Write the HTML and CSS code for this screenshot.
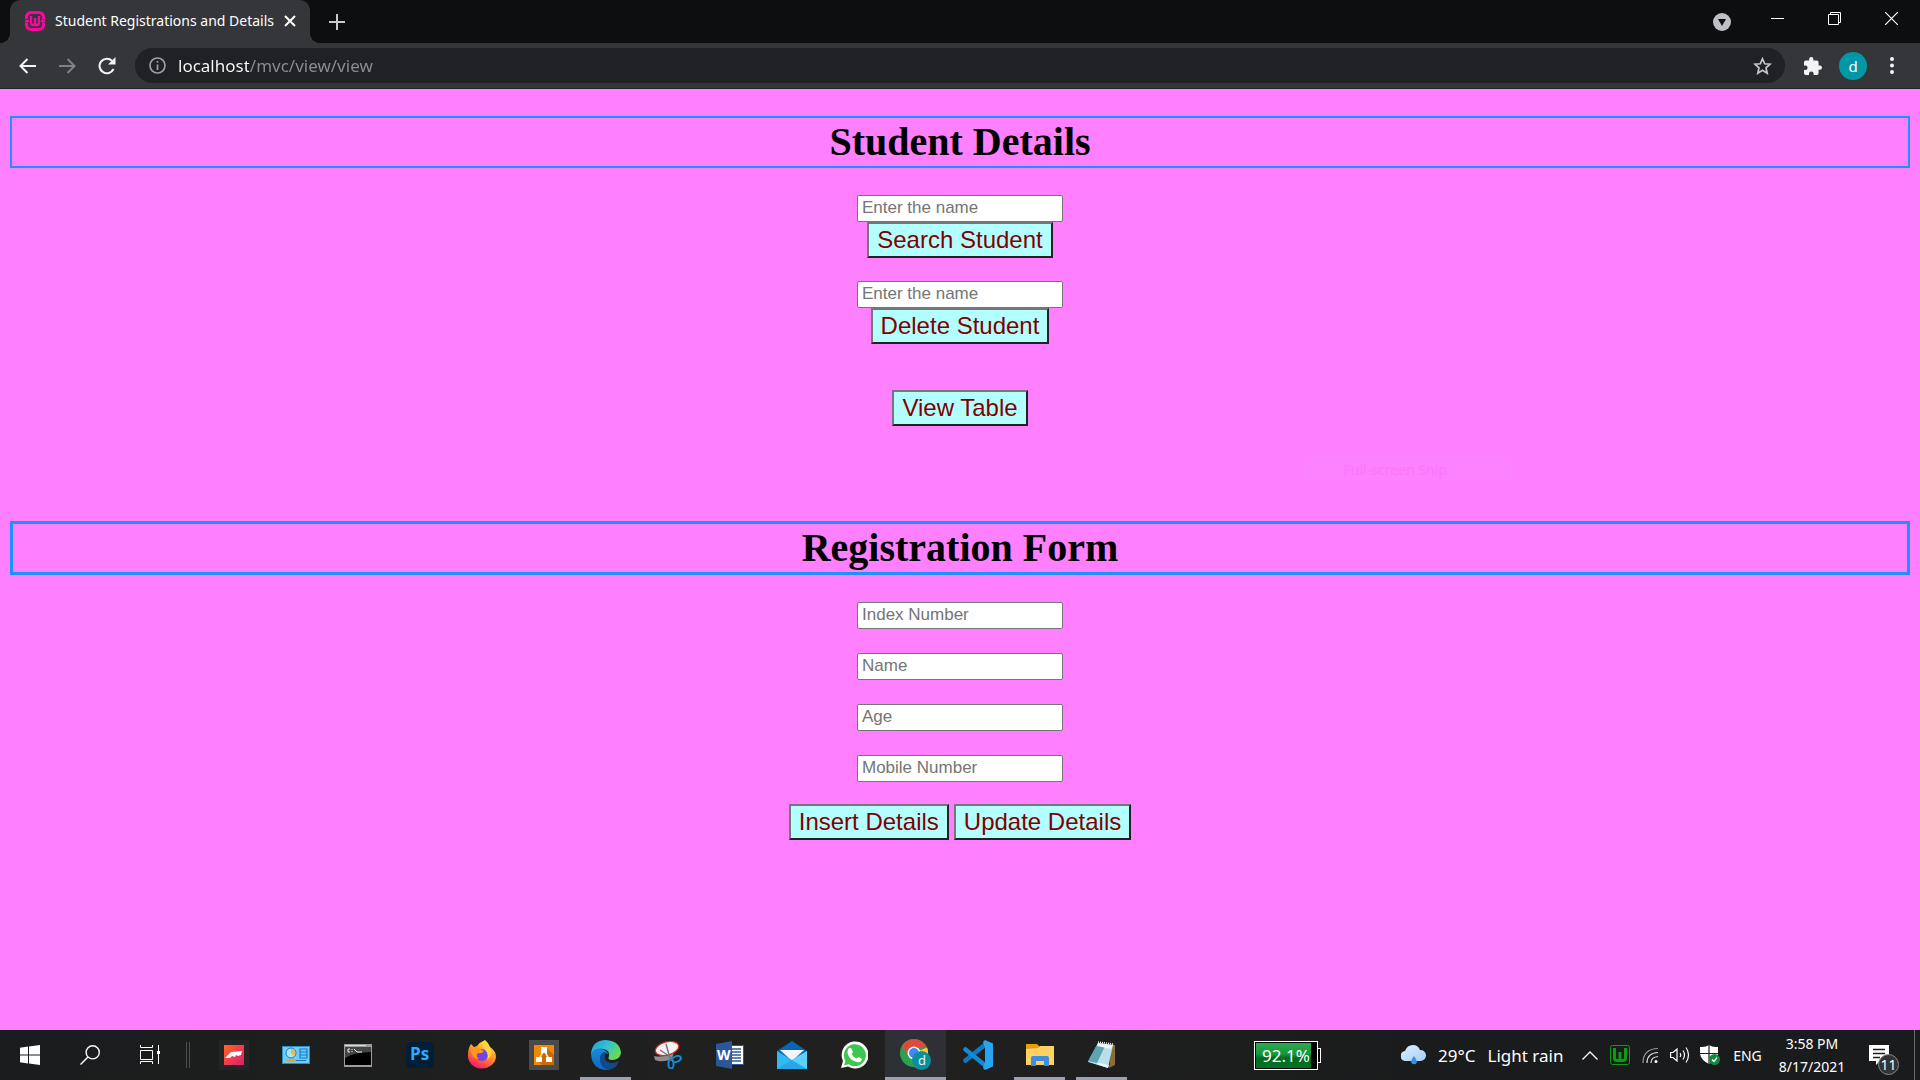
FILE: index.html
```html
<!DOCTYPE html>
<html lang="en">
<head>
<meta charset="utf-8">
<meta name="viewport" content="width=device-width, initial-scale=1">
<title>Student Registrations and Details</title>
<link rel="stylesheet" href="styles.css">
</head>
<body>
<header class="browser">
  <div class="tabstrip">
    <div class="tab">
      <svg class="favicon" width="20" height="20" viewBox="0 0 20 20" fill="none" stroke="#f908a0"><path stroke-width="3" d="M1.500 8V6.500Q1.500 1.500 6.500 1.500H13.500Q18.500 1.500 18.500 6.500V8M1.500 11.500V13.500Q1.500 18.500 6.500 18.500H13.500Q18.500 18.500 18.500 13.500V11.500"/><path stroke-width="2.400" d="M0 10H4M16 10H20M6 5V11.500Q6 14 8 14H12Q14 14 14 11.500V5M10 7V14"/></svg>
      <span class="tab-title">Student Registrations and Details</span>
      <button class="icon-btn tab-close" aria-label="Close tab"><svg width="12" height="12" viewBox="0 0 12 12" stroke="#fff" stroke-width="2"><path d="M1 1L11 11M11 1L1 11"/></svg></button>
    </div>
    <button class="icon-btn new-tab" aria-label="New tab"><svg width="16" height="16" viewBox="0 0 16 16" stroke="#c8cacf" stroke-width="2"><path d="M8 0V16M0 8H16"/></svg></button>
    <div class="window-controls">
      <button class="icon-btn tab-search" aria-label="Search tabs"><svg width="18" height="18" viewBox="0 0 18 18"><circle cx="9" cy="9" r="9" fill="#bdc1c6"/><path d="M5 6H13L9 13Z" fill="#0d0e10"/></svg></button>
      <button class="icon-btn win-btn" aria-label="Minimize"><svg width="13" height="13" viewBox="0 0 13 13"><path d="M0 6.500H13" stroke="#fff"/></svg></button>
      <button class="icon-btn win-btn" aria-label="Restore"><svg width="13" height="13" viewBox="0 0 13 13" fill="none" stroke="#fff"><path d="M.5 2.500H10.500V12.500H.5ZM2.500 2.500V.5H12.500V10.500H10.500"/></svg></button>
      <button class="icon-btn win-btn" aria-label="Close"><svg width="13" height="13" viewBox="0 0 13 13" stroke="#fff" stroke-width="1.2"><path d="M0 0L13 13M13 0L0 13"/></svg></button>
    </div>
  </div>
  <div class="toolbar">
    <button class="icon-btn nav-btn" aria-label="Back"><svg width="17" height="16" viewBox="0 0 17 16" fill="none" stroke="#f1f3f4" stroke-width="2"><path d="M17 8H2M8.500 1L1.500 8L8.500 15"/></svg></button>
    <button class="icon-btn nav-btn" aria-label="Forward"><svg width="17" height="16" viewBox="0 0 17 16" fill="none" stroke="#7f8185" stroke-width="2"><path d="M0 8H15M8.500 1L15.500 8L8.500 15"/></svg></button>
    <button class="icon-btn nav-btn" aria-label="Reload"><svg width="18" height="18" viewBox="0 0 18 18"><path d="M15.500 12A7.300 7.300 0 1 1 14 3.800" fill="none" stroke="#f1f3f4" stroke-width="2.100"/><path d="M17.500 0V7.500H10Z" fill="#f1f3f4"/></svg></button>
    <div class="omnibox">
      <svg width="17" height="17" viewBox="0 0 17 17" fill="none" stroke="#9aa0a6" stroke-width="1.700"><circle cx="8.500" cy="8.500" r="7.500"/><path d="M8.500 7.500V13M8.500 4V5.700"/></svg>
      <input class="url" type="text" aria-label="Address" value="localhost/mvc/view/view">
      <button class="icon-btn" aria-label="Bookmark this tab"><svg width="19" height="18" viewBox="0 0 19 18" fill="none" stroke="#c4c7cb" stroke-width="1.700"><path d="M9.500 1.800L11.700 6.800L17 7.200L13 10.800L14.200 16.200L9.500 13.300L4.800 16.200L6 10.800L2 7.200L7.300 6.800Z"/></svg></button>
    </div>
    <button class="icon-btn ext-btn" aria-label="Extensions"><svg width="18" height="18" viewBox="2 1 21 21" fill="#f1f3f4"><path d="M20.500 11H19V7a2 2 0 0 0-2-2h-4V3.500a2.500 2.500 0 0 0-5 0V5H4a2 2 0 0 0-2 2v3.800h1.500a2.700 2.700 0 0 1 0 5.400H2V20a2 2 0 0 0 2 2h3.800v-1.500a2.700 2.700 0 0 1 5.400 0V22H17a2 2 0 0 0 2-2v-4h1.500a2.500 2.500 0 0 0 0-5Z"/></svg></button>
    <button class="avatar" aria-label="Profile d">d</button>
    <button class="icon-btn menu-btn" aria-label="Menu"><svg width="4" height="17" viewBox="0 0 4 17" fill="#f1f3f4"><circle cx="2" cy="2" r="2"/><circle cx="2" cy="8.500" r="2"/><circle cx="2" cy="15" r="2"/></svg></button>
  </div>
</header>

<main class="page">
  <h1 class="heading">Student Details</h1>
  <form class="lookup">
    <input class="field" type="text" placeholder="Enter the name" aria-label="Name to search">
    <button class="action" type="button">Search Student</button>
  </form>
  <form class="lookup">
    <input class="field" type="text" placeholder="Enter the name" aria-label="Name to delete">
    <button class="action" type="button">Delete Student</button>
  </form>
  <div class="view-row"><button class="action" type="button">View Table</button></div>
  <h1 class="heading heading-form">Registration Form</h1>
  <form class="registration">
    <div class="fields">
      <input class="field" type="text" placeholder="Index Number" aria-label="Index Number">
      <input class="field" type="text" placeholder="Name" aria-label="Name">
      <input class="field" type="text" placeholder="Age" aria-label="Age">
      <input class="field" type="text" placeholder="Mobile Number" aria-label="Mobile Number">
    </div>
    <div class="actions">
      <button class="action" type="button">Insert Details</button>
      <button class="action" type="button">Update Details</button>
    </div>
  </form>
  <div class="snip-toast">Full-screen Snip</div>
</main>

<footer class="taskbar">
  <div class="system">
    <button class="icon-btn sys-btn" aria-label="Start"><svg width="20" height="20" viewBox="0 0 20 20" fill="#fff"><path d="M0 2.700L8 1.600V9.500H0ZM9 1.400L20 0V9.500H9ZM0 10.500H8V18.400L0 17.300ZM9 10.500H20V20L9 18.600Z"/></svg></button>
    <button class="icon-btn sys-btn" aria-label="Search"><svg width="20" height="20" viewBox="0 0 20 20" fill="none" stroke="#fff" stroke-width="1.400"><circle cx="12.700" cy="7.300" r="6.600"/><path d="M8 12L.5 19.500"/></svg></button>
    <button class="icon-btn sys-btn" aria-label="Task View"><svg width="20" height="20" viewBox="0 0 20 20" fill="none" stroke="#fff"><path d="M.5 5.500H12.500V14.500H.5ZM.5 0V2.500H12.500V0M.5 19V16.500H12.500V19M18.500 0V19"/><path fill="#fff" stroke="none" d="M17 6H20V9H17Z"/></svg></button>
    <span class="divider"></span>
  </div>
  <nav class="apps">
    <button class="app" aria-label="Design app"><svg width="30" height="30" viewBox="0 0 30 30"><defs><linearGradient id="red" x2="1" y2="1"><stop stop-color="#ff6a1a"/><stop offset=".5" stop-color="#f33b50"/><stop offset="1" stop-color="#d3226b"/></linearGradient></defs><path fill="#242424" d="M0 0H30V30H0Z"/><path fill="url(#red)" d="M5 5H25V25H5Z"/><path fill="#fff" d="M6 18L12 12L23 11L22 15L19 16L17 15L16 17L13 16L11 18Z"/></svg></button>
    <button class="app" aria-label="Control Panel"><svg width="28" height="18" viewBox="0 0 28 18"><path fill="#2b8fc4" d="M0 0H28V18H0Z"/><path fill="#6ccdfb" d="M1 1H27V17H1Z"/><circle cx="9" cy="7" r="5" fill="#a9e2ff" stroke="#167bbd"/><path fill="#f6b73c" d="M9 7V3A4 4 0 0 1 12 10Z"/><path stroke="#167bbd" stroke-width="1.200" fill="none" d="M18 3H25V12H18ZM18 6H25M18 9H25"/><path stroke="#f39b18" stroke-width="1.500" d="M4 14.500H14"/><path stroke="#167bbd" d="M14 14.500H24"/></svg></button>
    <button class="app" aria-label="Command Prompt"><svg width="28" height="23" viewBox="0 0 28 23"><path fill="#9a9ea0" d="M0 0H28V23H0Z"/><path fill="#000" d="M1 3H27V21H1Z"/><path fill="#444" d="M1 3H27V8Q10 8 1 14Z"/><path fill="#d9dcde" d="M1 1H22V2H1Z"/><path stroke="#eee" fill="none" d="M6 5H4V8H6M8 5V6M8 7V8M10 5L13 8H18"/></svg></button>
    <button class="app" aria-label="Photoshop"><svg width="28" height="28" viewBox="0 0 28 28"><rect x="0" y="1" width="28" height="26" rx="5" fill="#001e36"/><text x="4" y="19" fill="#31a8ff" class="app-letters">Ps</text></svg></button>
    <button class="app" aria-label="Firefox"><svg width="30" height="30" viewBox="0 0 30 30"><defs><linearGradient id="fox" x1=".8" x2=".3" y2="1"><stop stop-color="#fff44f"/><stop offset=".45" stop-color="#ff9a22"/><stop offset="1" stop-color="#f5156c"/></linearGradient></defs><path fill="url(#fox)" d="M18 0Q22 3 23 7Q29 11 29 17A14 12.500 0 0 1 1 15Q1 8 4 4L7 7L10 6Q13 2 18 0Z"/><circle cx="15" cy="15" r="6" fill="#7542e5"/><path fill="#ff9821" d="M3 9Q9 5 13 9L17 11Q15 14 11 13Q8 16 12 19Q5 19 3 9Z"/><path fill="#ffd43c" d="M17 1Q14 7 19 11Q22 15 20 20Q27 15 23 7Z"/></svg></button>
    <button class="app" aria-label="draw.io"><svg width="30" height="30" viewBox="0 0 30 30"><path fill="#4a4a4a" d="M0 0H30V30H0Z"/><path fill="#f08705" d="M5 5H25V25H5Z"/><path fill="#c96a06" d="M18 8L25 15V25H13L9 21Z"/><path stroke="#fff" stroke-width="1.500" d="M15 10L10 19M15 10L20 19"/><path fill="#fff" d="M12 7H18V13H12ZM7 17H13V22H7ZM17 17H23V22H17Z"/></svg></button>
    <button class="app running" aria-label="Microsoft Edge"><svg width="30" height="30" viewBox="0 0 30 30"><defs><linearGradient id="edge" y2=".5"><stop stop-color="#1b9de2"/><stop offset=".55" stop-color="#35c1d0"/><stop offset="1" stop-color="#67da55"/></linearGradient><linearGradient id="deep" x2="0" y2="1"><stop stop-color="#168bd8"/><stop offset="1" stop-color="#0b68c4"/></linearGradient></defs><path fill="url(#edge)" d="M0 14Q1 0 15 0Q29 1 30 13Q29 20 21 20Q16 20 18 16Q19 10 12 9Q5 8 0 14Z"/><path fill="url(#deep)" d="M0 14Q3 8 10 9Q16 10 17 14Q13 12 11 16Q10 24 20 25Q25 25 27 23Q22 30 15 30Q1 29 0 14Z"/><path fill="#114a8b" d="M9 17Q10 12 15 12Q11 22 21 23Q25 23 28 21Q25 29 17 30Q8 27 9 17Z"/></svg></button>
    <button class="app" aria-label="Snipping Tool"><svg width="28" height="28" viewBox="0 0 28 28"><path fill="#8d8d8d" d="M0 15Q10 17 20 11L18 18Q8 22 1 19Z"/><ellipse cx="13" cy="7.500" rx="12" ry="6.500" transform="rotate(-15 13 7.500)" fill="#f3f3f3" stroke="#d12b2b" stroke-width="1.300"/><path stroke="#777" stroke-width="1.500" d="M12 3L16 17M6 9L18 17"/><g fill="none" stroke="#1688d6" stroke-width="2"><ellipse cx="22.500" cy="18" rx="4.500" ry="2.800" transform="rotate(-20 22.500 18)"/><ellipse cx="17" cy="23" rx="2.600" ry="4.500"/></g></svg></button>
    <button class="app" aria-label="Word"><svg width="28" height="28" viewBox="0 0 28 28"><path fill="#fff" stroke="#2b579a" d="M14 4.500H27.500V23.500H14Z"/><path stroke="#2b579a" stroke-width="1.300" d="M16 8H25M16 11H25M16 14H25M16 17H25M16 20H25"/><path fill="#2b579a" d="M0 3L16 0V28L0 25Z"/><text x="1" y="19" fill="#fff" class="app-letters word-letter">W</text></svg></button>
    <button class="app" aria-label="Mail"><svg width="30" height="28" viewBox="0 0 30 28"><path fill="#0a64b5" d="M0 10L15 0L30 10V20H0Z"/><path fill="#f6f6f6" d="M3 9H27L15 20Z"/><path fill="#35b8f1" d="M0 10L15 19L30 10V28H0Z"/><path fill="#1b93e0" d="M15 19L30 28H0Z" opacity=".5"/><path fill="#5bd2fb" d="M30 10V28L15 19Z"/></svg></button>
    <button class="app" aria-label="WhatsApp"><svg width="28" height="28" viewBox="0 0 28 28"><path fill="#fff" d="M1 27L3 20A13.500 13.500 0 1 1 8 25.500Z"/><path fill="#3fc650" d="M4 24.500L5.500 20A11 11 0 1 1 8.500 23.200Z"/><path fill="#fff" d="M9 7L11 7L13 11L11.500 13Q13 16 16.500 17.500L18.500 16L22 18Q21 22 17 21Q9 19 7.500 12Q7 9 9 7Z"/></svg></button>
    <button class="app active" aria-label="Chrome"><svg width="32" height="32" viewBox="0 0 32 32"><circle cx="14" cy="14" r="14" fill="#2ca14f"/><path fill="#fcc934" d="M14 14L27 8.500A14 14 0 0 1 14 28Z"/><path fill="#dd4b3e" d="M1.900 7A14 14 0 0 1 26.500 8H14L7.500 15.500Z"/><circle cx="14" cy="14" r="6.500" fill="#fff"/><circle cx="14" cy="14" r="5" fill="#4285f4"/><circle cx="21.500" cy="21.500" r="9.500" fill="#0b8f9d"/><text x="18" y="26" class="badge-letter" fill="#e6f3f4">d</text></svg></button>
    <button class="app" aria-label="Visual Studio Code"><svg width="30" height="30" viewBox="0 0 30 30"><path fill="none" stroke="#0a7bc4" stroke-width="4.500" stroke-linecap="round" d="M23 4L2.500 20.500"/><path fill="none" stroke="#1389d2" stroke-width="4.500" stroke-linecap="round" d="M2.500 9.500L23 26"/><path fill="#27a5f2" d="M22 0L30 3.500V26.500L22 30L20 28L22 22V8L20 2Z"/></svg></button>
    <button class="app running" aria-label="File Explorer"><svg width="28" height="24" viewBox="0 0 28 24"><path fill="#e3a008" d="M0 1H11L14 4V8H0Z"/><path fill="#fdd262" d="M0 6L12 5L14 3H28V22H0Z"/><path fill="#3c8fdc" d="M5 23V15Q5 13 7 13H21Q23 13 23 15V23H18V18H10V23Z"/></svg></button>
    <button class="app running" aria-label="Notepad"><svg width="28" height="28" viewBox="0 0 28 28"><path fill="#8a6d3a" d="M24 3L27 4V24L21 27Z"/><path fill="#b9e0e6" d="M10 2L25 4L20 27L0 21Z"/><path fill="#5da3b2" d="M10 2L18 3L9 22L0 20Z"/><path fill="#eaf5f6" d="M10 2L25 4L23 8L9 5ZM12 22L21 24L20 27L8 23Z"/><path stroke="#eee" stroke-width="1.500" stroke-dasharray="1 1" d="M10 1L25 3"/></svg></button>
  </nav>
  <div class="tray">
    <div class="battery"><div class="battery-body"><div class="battery-level"></div><span class="battery-text">92.1%</span></div><div class="battery-tip"></div></div>
    <button class="weather">
      <svg width="25" height="20" viewBox="0 0 25 20"><defs><linearGradient id="cloud" y2="1"><stop stop-color="#dff1ff"/><stop offset="1" stop-color="#a3cdf5"/></linearGradient></defs><path fill="url(#cloud)" d="M5 16A5 5 0 0 1 4 6Q6 0 12 0Q17 0 19 5A5.500 5.500 0 0 1 20 16Z"/><path fill="#3a8ee8" d="M13 11Q17 16 15.500 18A3 3 0 0 1 10.500 18Q9 16 13 11Z"/></svg>
      <span>29°C</span><span>Light rain</span>
    </button>
    <button class="icon-btn tray-btn" aria-label="Show hidden icons"><svg width="16" height="9" viewBox="0 0 16 9" fill="none" stroke="#fff" stroke-width="1.300"><path d="M.5 8.500L8 1L15.500 8.500"/></svg></button>
    <button class="icon-btn tray-btn" aria-label="WampServer"><svg width="20" height="20" viewBox="0 0 20 20" fill="none" stroke="#0b9d11"><rect x=".5" y=".5" width="19" height="19" rx="2"/><path stroke-width="3" d="M4.500 3V13Q4.500 15.500 7 15.500H13Q15.500 15.500 15.500 13V3M10 7V15"/></svg></button>
    <button class="icon-btn tray-btn" aria-label="Network"><svg width="17" height="17" viewBox="0 0 17 17" fill="none" stroke="#d9d9d9" stroke-width="1.200"><path d="M1 16Q1 2 16 1.500" stroke="#999"/><path d="M5 16Q5 6 16 5.500M9 16Q9 10 16 9.500"/><circle cx="14" cy="14.500" r="1.500" fill="#fff" stroke="none"/></svg></button>
    <button class="icon-btn tray-btn" aria-label="Volume"><svg width="20" height="18" viewBox="0 0 20 18" fill="none" stroke="#fff" stroke-width="1.200"><path d="M.6 6.500H3L7 3V15L3 11.500H.6ZM10 7Q11.500 9 10 11M13 4.500Q16 9 13 13.500M16 1.500Q21 9 16 16.500"/></svg></button>
    <button class="icon-btn tray-btn" aria-label="Security"><svg width="20" height="20" viewBox="0 0 20 20"><path fill="#fff" d="M0 2Q6 2.500 9 0Q12 2.500 18 2V9Q17 15 9 19Q1 15 0 9Z"/><path stroke="#1c1d1d" stroke-width="1.200" d="M9 0V19M0 8.500H18"/><circle cx="14.500" cy="14.500" r="5.500" fill="#12883f"/><path d="M12 14.500L14 16.500L17 12.500" fill="none" stroke="#fff" stroke-width="1.300"/></svg></button>
    <button class="language">ENG</button>
    <button class="clock"><span>3:58 PM</span><span>8/17/2021</span></button>
    <button class="notifications" aria-label="11 notifications"><svg width="20" height="20" viewBox="0 0 20 20"><path fill="#fff" d="M0 0H20V16H11L7 20V16H0Z"/><path stroke="#1c1d1d" stroke-width="1.300" d="M4 4.500H16M4 8.500H16M4 12.500H11"/></svg><span class="count">11</span></button>
    <button class="show-desktop" aria-label="Show desktop"></button>
  </div>
</footer>
</body>
</html>
```
FILE: styles.css
```css
* { box-sizing: border-box; }

body {
  margin: 0;
  min-height: 100vh;
  display: flex;
  flex-direction: column;
  background: #ff80ff;
  font-family: "Noto Sans", "Open Sans", sans-serif;
}

button { font-family: inherit; cursor: pointer; }
svg { display: block; flex: none; }

.icon-btn,
.app {
  display: flex;
  align-items: center;
  justify-content: center;
  padding: 0;
  border: 0;
  background: none;
}

/* Browser frame */
.browser { background: #35363a; border-bottom: 1px solid #232427; }

.tabstrip {
  display: flex;
  height: 43px;
  padding-left: 10px;
  background: #0d0e10;
}

.tab {
  position: relative;
  display: flex;
  align-items: center;
  width: 300px;
  padding: 0 15px 2px;
  gap: 10px;
  border-radius: 10px 10px 0 0;
  background: #35363a;
  color: #fff;
}

.tab::before,
.tab::after {
  content: "";
  position: absolute;
  bottom: 0;
  width: 10px;
  height: 10px;
}
.tab::before { right: 100%; background: radial-gradient(circle at 0 0, #0d0e10 10px, #35363a 10px); }
.tab::after { left: 100%; background: radial-gradient(circle at 100% 0, #0d0e10 10px, #35363a 10px); }

.tab-title { flex: 1; font-size: 14px; line-height: 20px; white-space: nowrap; }
.new-tab { width: 54px; }

.window-controls { display: flex; margin-left: auto; height: 37px; }
.tab-search { width: 40px; padding-top: 6px; margin-right: 7px; }
.win-btn { width: 57px; }

.toolbar {
  display: flex;
  align-items: center;
  height: 45px;
  padding: 0 18px 0 7px;
}
.nav-btn { width: 40px; height: 36px; }

.omnibox {
  display: flex;
  flex: 1;
  align-items: center;
  height: 35px;
  margin-left: 8px;
  padding: 0 13px 0 14px;
  gap: 12px;
  border-radius: 18px;
  background: #202124;
}

.url {
  flex: 1;
  min-width: 0;
  height: 28px;
  padding: 0;
  border: 0;
  outline: 0;
  background: linear-gradient(90deg, #fff 71px, #8b8e92 71px);
  -webkit-background-clip: text;
  background-clip: text;
  -webkit-text-fill-color: transparent;
  font: 17px/28px "Noto Sans", "Open Sans", sans-serif;
}

.ext-btn { width: 20px; margin: 0 16px 0 18px; }

.avatar {
  width: 28px;
  height: 28px;
  padding: 0;
  border: 0;
  border-radius: 50%;
  background: #0097a7;
  color: #fff;
  font-size: 15px;
  line-height: 26px;
}
.menu-btn { width: 20px; margin-left: 15px; }

/* Page */
.page {
  position: relative;
  flex: 1;
  padding: 27px 10px;
}

.heading {
  margin: 0 0 27px;
  border: 2px solid #1e90ff;
  color: #000;
  font: bold 40px/48px "Liberation Serif", "Times New Roman", serif;
  text-align: center;
}
.heading-form { border-width: 3px; }

.lookup,
.registration,
.fields {
  display: flex;
  flex-direction: column;
  align-items: center;
}
.lookup { margin-bottom: 23px; }
.registration { gap: 22px; }
.fields { gap: 24px; }

.field {
  width: 206px;
  height: 27px;
  padding: 1px 4px 3px;
  border: 1px solid #767676;
  border-radius: 2px;
  background: #fff;
  font: 17px/21px "Liberation Sans", Arial, sans-serif;
}
.field::placeholder { color: #757575; }

.action {
  height: 36px;
  padding: 0 8px;
  border: 2px solid;
  border-color: #767676 #212121 #212121 #767676;
  border-radius: 0;
  background: #b3ffff;
  color: #800000;
  font: 24px/30px "Liberation Sans", Arial, sans-serif;
}

.view-row { display: flex; justify-content: center; padding: 23px 0 95px; }
.actions { display: flex; gap: 5px; }

/* Fading tooltip left over the page */
.snip-toast {
  position: absolute;
  top: 368px;
  left: 68%;
  width: 205px;
  padding-left: 38px;
  background: #fd82fd;
  color: #fb77fb;
  font-size: 14px;
  line-height: 25px;
}

/* Taskbar */
.taskbar {
  display: flex;
  justify-content: space-between;
  height: 50px;
  background: linear-gradient(90deg, #1b1c1d, #20211f 45%, #1a1b1c 75%);
  color: #fff;
}

.system,
.apps,
.tray { display: flex; align-items: center; }

.system { margin-right: 13px; }
.sys-btn { width: 60px; height: 50px; }
.divider {
  width: 4px;
  height: 26px;
  margin: 0 0 0 6px;
  border: solid #4c4d4d;
  border-width: 0 1px;
}

.apps { gap: 1px; margin-right: auto; }
.app { width: 61px; height: 50px; position: relative; }
.running::after,
.active::after {
  content: "";
  position: absolute;
  bottom: 0;
  left: 5px;
  right: 5px;
  height: 3px;
  background: #9aa1b0;
}
.active { background: #2d3135; }
.active::after { left: 0; right: 0; }

.app-letters { font: bold 17px "Open Sans", sans-serif; }
.word-letter { font-size: 14px; }
.badge-letter { font: 13px "Noto Sans", sans-serif; }

.battery { display: flex; align-items: center; margin-right: 80px; }
.battery-body {
  position: relative;
  width: 64px;
  height: 29px;
  padding: 1px;
  border: 1px solid #fff;
  background: #000;
}
.battery-level {
  width: 92%;
  height: 100%;
  background: linear-gradient(#2bab4b, #169640 45%, #006b1f 60%, #007524);
}
.battery-text {
  position: absolute;
  inset: 0;
  font-size: 17px;
  line-height: 28px;
  text-align: center;
}
.battery-tip {
  width: 3px;
  height: 15px;
  border: solid #fff;
  border-width: 1px 1px 1px 0;
  background: #000;
}

.weather,
.language,
.clock,
.notifications,
.show-desktop {
  height: 50px;
  padding: 0;
  border: 0;
  background: none;
  color: #fff;
}

.weather {
  display: flex;
  align-items: center;
  width: 174px;
  gap: 12px;
  font-size: 17px;
  white-space: nowrap;
}
.tray-btn { width: 30px; height: 50px; }
.language { width: 45px; font-size: 14px; }
.clock {
  display: flex;
  flex-direction: column;
  align-items: center;
  justify-content: center;
  width: 84px;
  font-size: 14px;
  line-height: 23px;
}

.notifications {
  position: relative;
  display: flex;
  align-items: center;
  padding-left: 15px;
  width: 60px;
}
.count {
  position: absolute;
  left: 24px;
  bottom: 5px;
  width: 21px;
  height: 21px;
  border: 1px solid #8a8a8a;
  border-radius: 50%;
  background: #333435;
  font-size: 14px;
  line-height: 19px;
  text-align: center;
}
.show-desktop { width: 6px; border-left: 1px solid #6b6b6b; }
```
